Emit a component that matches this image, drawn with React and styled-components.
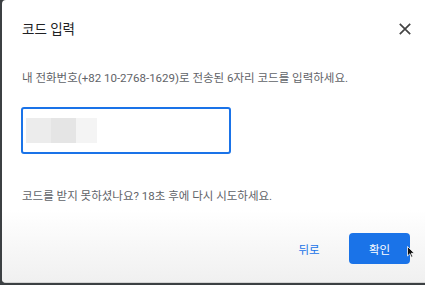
import styled, { createGlobalStyle } from 'styled-components';

const GlobalStyle = createGlobalStyle`
  html, body {
    margin: 0;
    padding: 0;
    width: 425px;
    height: 285px;
    overflow: hidden;
    background: #3c4043;
  }
  body {
    font-family: Roboto, "Noto Sans CJK KR", sans-serif;
  }
`;

const App = () => {
  return (
    <>
      <GlobalStyle />
      <Page>
        <Dialog>
          <Header>
            <Title>코드 입력</Title>
            <CloseButton aria-label="닫기">
              <svg width="12" height="12" viewBox="0 0 12 12">
                <path d="M0.8 0.8 L11.2 11.2 M11.2 0.8 L0.8 11.2" stroke="#444" strokeWidth="1.7" fill="none" />
              </svg>
            </CloseButton>
          </Header>
          <Body>
            <Description>내 전화번호(+82 10-2768-1629)로 전송된 6자리 코드를 입력하세요.</Description>
            <CodeField>
              <Masked $shade="#ececec" $width={25} />
              <Masked $shade="#e5e5e5" $width={25} />
              <Masked $shade="#f4f4f4" $width={21} />
            </CodeField>
            <Hint>코드를 받지 못하셨나요? 18초 후에 다시 시도하세요.</Hint>
          </Body>
          <Footer>
            <TextButton>뒤로</TextButton>
            <PrimaryButton>확인</PrimaryButton>
            <Cursor width="8" height="12" viewBox="0 0 8 12">
              <path d="M0.5 0.5 L0.5 10 L2.8 7.8 L4.4 11.3 L5.8 10.7 L4.3 7.3 L7.4 7.3 Z" fill="#111" stroke="#fff" strokeWidth="0.8" />
            </Cursor>
          </Footer>
        </Dialog>
      </Page>
    </>
  );
};

export default App;

const Page = styled.div`
  display: flex;
  width: 425px;
  height: 285px;
  padding-left: 2px;
  box-sizing: border-box;
`;

const Dialog = styled.div`
  display: flex;
  flex-direction: column;
  flex: 1;
  height: 283px;
  background: #fff;
  border-radius: 4px 0 0 4px;
  border-bottom: 1px solid #d4d4d4;
  box-sizing: border-box;
  overflow: hidden;
`;

const Header = styled.div`
  display: flex;
  align-items: center;
  justify-content: space-between;
  padding: 20px 13px 0 20px;
  height: 18px;
`;

const Title = styled.h2`
  margin: 0;
  font-size: 13.5px;
  font-weight: 400;
  line-height: 18px;
  color: #202124;
`;

const CloseButton = styled.button`
  display: flex;
  align-items: center;
  justify-content: center;
  width: 14px;
  height: 14px;
  padding: 0;
  border: none;
  background: none;
`;

const Body = styled.div`
  display: flex;
  flex-direction: column;
  align-items: flex-start;
  padding: 32px 22px 0 19px;
`;

const Description = styled.p`
  margin: 0 0 0 1px;
  font-size: 11.5px;
  line-height: 16px;
  color: #5f6368;
`;

const CodeField = styled.div`
  display: flex;
  align-items: center;
  margin-top: 21px;
  width: 210px;
  height: 47px;
  padding-left: 3px;
  border: 2px solid #1a73e8;
  border-radius: 3px;
  box-sizing: border-box;
`;

const Masked = styled.div`
  width: ${(p) => p.$width}px;
  height: 25px;
  background: ${(p) => p.$shade};
`;

const Hint = styled.p`
  margin: 34px 0 0 1px;
  font-size: 11.5px;
  line-height: 16px;
  color: #5f6368;
`;

const Footer = styled.div`
  position: relative;
  display: flex;
  align-items: flex-start;
  justify-content: flex-end;
  gap: 12px;
  flex: 1;
  margin-top: 6px;
  padding: 23px 15px 0 0;
  background: linear-gradient(#ffffff, #f0f0f0);
`;

const TextButton = styled.button`
  width: 56px;
  height: 31px;
  padding: 0;
  border: none;
  background: none;
  font-family: inherit;
  font-size: 11.5px;
  color: #1a73e8;
`;

const PrimaryButton = styled.button`
  width: 61px;
  height: 31px;
  padding: 0;
  border: none;
  border-radius: 4px;
  background: #1a73e8;
  font-family: inherit;
  font-size: 11.5px;
  color: #fff;
`;

const Cursor = styled.svg`
  position: absolute;
  right: 10px;
  top: 36px;
`;
